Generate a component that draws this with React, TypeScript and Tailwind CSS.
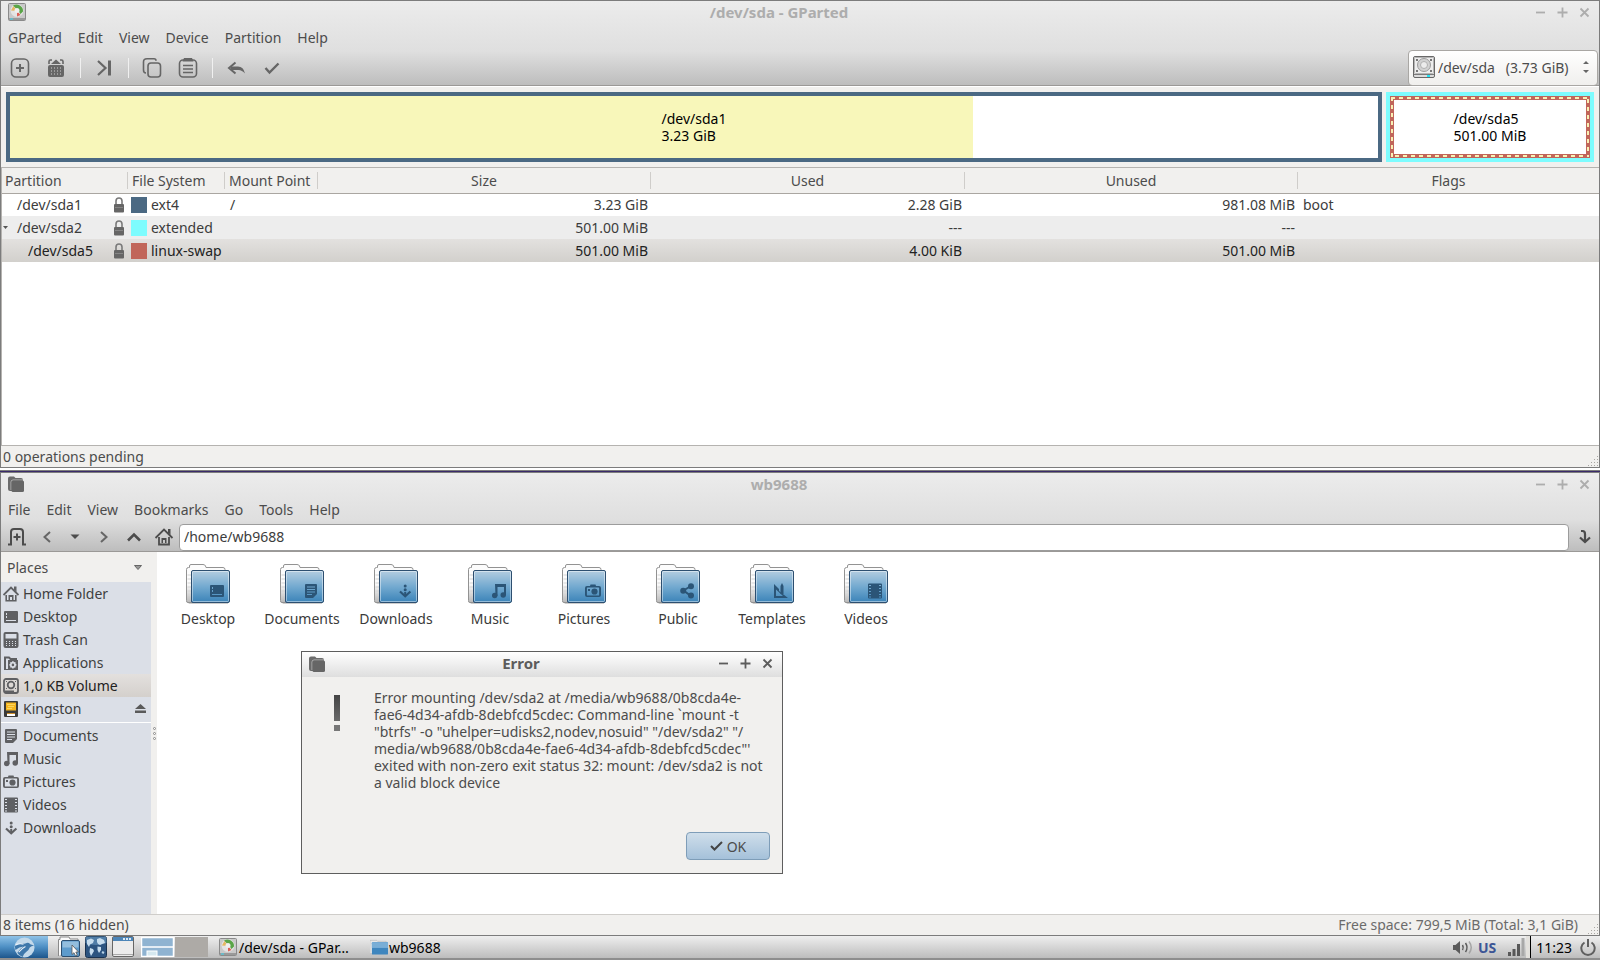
import React from 'react';

type GlyphName =
  | 'home'
  | 'desktop'
  | 'trash'
  | 'applications'
  | 'volume'
  | 'documents'
  | 'music'
  | 'pictures'
  | 'videos'
  | 'downloads'
  | 'public'
  | 'templates';

// 16x16 symbolic glyphs, shared by the side pane and the folder emblems
const glyphs: Record<GlyphName, React.ReactNode> = {
  home: (
    <>
      <path d="M0.5 9L8 1.500l7.500 7.500" fill="none" stroke="currentColor" strokeWidth="1.800" />
      <path d="M11 0.500h2.500v5.500L11 3.500z" />
      <path d="M3.200 9v5.700h9.600V9" fill="none" stroke="currentColor" strokeWidth="1.600" />
      <path d="M5.500 9h5v5H9v-3H7v3H5.500z" />
    </>
  ),
  desktop: (
    <path
      fillRule="evenodd"
      d="M2 2h12a1 1 0 0 1 1 1v10a1 1 0 0 1-1 1H2a1 1 0 0 1-1-1V3a1 1 0 0 1 1-1zM3 4v2h1V4zM3 7v2h1V7zM3 11v1h10v-1z"
    />
  ),
  trash: (
    <path
      fillRule="evenodd"
      d="M2.500 0h11a2 2 0 0 1 2 2v12a2 2 0 0 1-2 2h-11a2 2 0 0 1-2-2V2a2 2 0 0 1 2-2zM2.500 2v4.500h11V2zM3 9v1h1V9zM6 9v1h1V9zM9 9v1h1V9zM12 9v1h1V9zM3 11v1h1v-1zM6 11v1h1v-1zM9 11v1h1v-1zM12 11v1h1v-1zM3 13v1h1v-1zM6 13v1h1v-1zM9 13v1h1v-1zM12 13v1h1v-1z"
    />
  ),
  applications: (
    <>
      <path d="M2 14V2.500h4L7.500 4H14" fill="none" stroke="currentColor" strokeWidth="2" />
      <path
        fillRule="evenodd"
        d="M5 5h10v10H1v-1h4zM9.200 6.300l-.3 1-1-.4-.9.900.4 1-1 .4v1.300l1 .4-.4 1 .9.900 1-.4.3 1h1.400l.3-1 1 .4.9-.9-.4-1 1-.4V9.200l-1-.4.4-1-.9-.9-1 .4-.3-1z"
      />
      <circle cx="9.900" cy="9.900" r="1.300" />
    </>
  ),
  volume: (
    <>
      <rect x="1" y="1" width="14" height="14" rx="2" fill="none" stroke="currentColor" strokeWidth="1.800" />
      <circle cx="8" cy="7" r="3.300" fill="none" stroke="currentColor" strokeWidth="1.800" />
      <path d="M3 3h1v1H3zM12 3h1v1h-1zM3 10h1v1H3zM12 10h1v1h-1zM2 12.500h9V14H2z" />
    </>
  ),
  documents: (
    <path
      fillRule="evenodd"
      d="M3 1h10a1 1 0 0 1 1 1v9l-4 4H3a1 1 0 0 1-1-1V2a1 1 0 0 1 1-1zM4 3.500v1h8v-1zM4 6v1h8V6zM4 8.500v1h8v-1zM4 11v1h5v-1z"
    />
  ),
  music: (
    <>
      <path d="M4 1h11v11.500h-2V4H6.500v9H4.500z" />
      <circle cx="3.700" cy="12.500" r="2.700" />
      <circle cx="12.200" cy="12" r="2.700" />
    </>
  ),
  pictures: (
    <>
      <path
        fillRule="evenodd"
        d="M5.500 1.500h5l.5 1.500h3a2 2 0 0 1 2 2v7a2 2 0 0 1-2 2H2a2 2 0 0 1-2-2V5a2 2 0 0 1 2-2h3zM2.500 4.500a.6.6 0 0 0-.6.6v6.800c0 .4.300.6.600.6h11a.6.6 0 0 0 .6-.6V5.100a.6.6 0 0 0-.6-.6z"
      />
      <circle cx="9.500" cy="8.500" r="3.100" />
      <path d="M3 6h2v2H3z" />
    </>
  ),
  videos: (
    <path
      fillRule="evenodd"
      d="M2 0.500h12a1 1 0 0 1 1 1v13a1 1 0 0 1-1 1H2a1 1 0 0 1-1-1v-13a1 1 0 0 1 1-1zM2 2v1h2V2zM2 5v1h2V5zM2 8v1h2V8zM2 11v1h2v-1zM2 13.500v1h2v-1zM12 2v1h2V2zM12 5v1h2V5zM12 8v1h2V8zM12 11v1h2v-1zM12 13.500v1h2v-1z"
    />
  ),
  downloads: (
    <>
      <path d="M3 8.500l5.200 4.700 5.200-4.700" fill="none" stroke="currentColor" strokeWidth="2.200" />
      <path d="M7.200 9h2v4h-2z" />
      <circle cx="8.200" cy="3" r="1.500" />
      <circle cx="8.200" cy="6.700" r="1.500" />
    </>
  ),
  public: (
    <>
      <path d="M12 3L4.500 7.500 12 13" fill="none" stroke="currentColor" strokeWidth="2" />
      <circle cx="12" cy="3.200" r="3" />
      <circle cx="4.200" cy="7.700" r="3" />
      <circle cx="12" cy="12.500" r="3" />
    </>
  ),
  templates: (
    <>
      <path fillRule="evenodd" d="M1 1l5 5v2l9 7H1zM3 6.500v6.500h7z" />
      <path d="M7.500 3L9 0l1.500 3v8h-3z" />
    </>
  ),
};

function Glyph({ name }: { name: GlyphName }) {
  return (
    <svg className="h-4 w-4 shrink-0 text-[#5f6063]" viewBox="0 0 16 16" fill="currentColor">
      {glyphs[name]}
    </svg>
  );
}

function FolderIcon({ emblem }: { emblem: GlyphName }) {
  return (
    <svg className="h-[41px] w-11" viewBox="0 0 44 41">
      <defs>
        <linearGradient id="folderFront" x1="0" y1="0" x2="0" y2="1">
          <stop offset="0" stopColor="#b4cde0" />
          <stop offset="0.500" stopColor="#74aad0" />
          <stop offset="1" stopColor="#3a83b8" />
        </linearGradient>
        <linearGradient id="folderBack" x1="0" y1="0" x2="0" y2="1">
          <stop offset="0.500" stopColor="#fcfcfc" />
          <stop offset="1" stopColor="#b9b9b9" />
        </linearGradient>
      </defs>
      <path d="M2 38.500h40V40H3z" fill="#9a9a9a" opacity="0.500" />
      <path
        d="M0.500 36.500V5.500q0-2 2-2h1V2q0-1.500 1.500-1.500h12q2 0 2.500 1.500l.5 1.500h17q2 0 2 2V38.500H2q-1.500 0-1.500-1.500z"
        fill="url(#folderBack)"
        stroke="#929292"
      />
      <path d="M1.500 11h4M1.500 15h4M1.500 19h4M1.500 23h4M1.500 27h4M1.500 31h4" stroke="#d4d4d4" />
      <rect x="5.500" y="6.500" width="38" height="32" rx="1.500" fill="url(#folderFront)" stroke="#2d4f70" />
      <rect x="6.500" y="7.500" width="36" height="30" rx="1" fill="none" stroke="#ffffff" opacity="0.450" />
      <g transform="translate(23 19)" fill="currentColor" className="text-[#2b5577]">
        {glyphs[emblem]}
      </g>
    </svg>
  );
}

function AppFolderIcon() {
  return (
    <svg className="h-4 w-4" viewBox="0 0 16 16">
      <path d="M0 2.500Q0 0.500 2 0.500h4L7.500 2H13q2 0 2 2v9q0 2-2 2H2q-2 0-2-2z" fill="#6b6b6b" />
      <path d="M3 14V6q0-2 2-2h10" fill="none" stroke="#b4b4b4" />
      <rect x="3.500" y="4.500" width="12.500" height="11.500" rx="1.500" fill="#666" />
    </svg>
  );
}

function GPartedIcon() {
  return (
    <svg className="h-[18px] w-[18px]" viewBox="0 0 18 18">
      <rect x="0.500" y="0.500" width="17" height="17" rx="1" fill="#c9c9c9" stroke="#8a8a8a" />
      <circle cx="9" cy="7.500" r="6.500" fill="#e4e4e4" />
      <path d="M5 2.500A6.500 6.500 0 0 1 15 8.500L12.500 11 10.500 8z" fill="#5aa548" />
      <path d="M5.500 3L3 7.500l6 .5z" fill="#e5b660" />
      <path d="M9 8l3.500 4L9 13.500z" fill="#dd5f55" />
      <circle cx="9" cy="7.500" r="2.500" fill="#efefef" />
      <path d="M1 15h16v2H1z" fill="#9a9a9a" />
      <path d="M2 15.500h3v1H2z" fill="#3fd8f5" />
    </svg>
  );
}

function DriveIcon() {
  return (
    <svg className="h-[22px] w-[22px] shrink-0" viewBox="0 0 22 22">
      <rect x="0.500" y="0.500" width="21" height="21" rx="1.500" fill="#dcdcdc" stroke="#686868" />
      <rect x="1.500" y="1.500" width="19" height="16" rx="1" fill="#ededed" stroke="#b5b5b5" />
      <circle cx="11" cy="9" r="6.500" fill="#d2d2d2" stroke="#9c9c9c" />
      <circle cx="11" cy="9" r="3.500" fill="#ececec" stroke="#b0b0b0" />
      <path d="M3 3h2v2H3zM17 3h2v2h-2zM3 14h2v2H3zM17 14h2v2h-2z" fill="#777" />
      <path d="M1 18.500h20" stroke="#7a7a7a" />
      <path d="M14 19h3v2h-3z" fill="#22e4f7" />
    </svg>
  );
}

function LockIcon() {
  return (
    <svg className="h-4 w-[10px] shrink-0" viewBox="0 0 10 16">
      <path d="M2 8V4a3 3 0 0 1 6 0v4" fill="none" stroke="#7a7a7a" strokeWidth="1.600" />
      <rect x="0" y="7" width="10" height="8.500" rx="1" fill="#666" />
      <path d="M1 10.500h8" stroke="#868686" />
    </svg>
  );
}

function Grip() {
  return (
    <svg className="h-[11px] w-[11px]" viewBox="0 0 11 11" fill="#a8a6a2">
      <path d="M9 0h1v1H9zM9 3h1v1H9zM6 3h1v1H6zM9 6h1v1H9zM6 6h1v1H6zM3 6h1v1H3zM9 9h1v1H9zM6 9h1v1H6zM3 9h1v1H3zM0 9h1v1H0z" />
    </svg>
  );
}

interface TitleBarProps {
  title: string;
  icon: React.ReactNode;
  active?: boolean;
}

function TitleBar({ title, icon, active = false }: TitleBarProps) {
  const buttons = [
    { label: 'Minimize', path: 'M1 5.500h9' },
    { label: 'Maximize', path: 'M0.500 5.500h10M5.500 0.500v10' },
    { label: 'Close', path: 'M1.500 1.500l8 8M9.500 1.500l-8 8' },
  ];

  return (
    <div
      className={
        active
          ? 'flex h-[25px] items-center bg-linear-to-b from-white to-[#dedede] pr-1 pb-0.5 text-[#5c5c5c]'
          : 'flex h-[22px] items-center pr-1 text-[#adadad]'
      }
    >
      <div className="flex w-8 shrink-0 pl-[7px]">{icon}</div>
      <h2 className="flex-1 pr-1 text-center text-[15px] font-bold">{title}</h2>
      {buttons.map((b) => (
        <button key={b.label} type="button" aria-label={b.label} className="flex w-[22px] justify-center">
          <svg className="h-[11px] w-[11px]" viewBox="0 0 11 11" fill="none" stroke="currentColor" strokeWidth="1.800">
            <path d={b.path} />
          </svg>
        </button>
      ))}
    </div>
  );
}

function MenuBar({ items }: { items: string[] }) {
  return (
    <nav className="flex h-7 items-center gap-4 px-[7px]">
      {items.map((item) => (
        <button key={item} type="button">
          {item}
        </button>
      ))}
    </nav>
  );
}

interface ToolButtonProps {
  label: string;
  className: string;
  children: React.ReactNode;
}

function ToolButton({ label, className, children }: ToolButtonProps) {
  return (
    <button type="button" aria-label={label} className={`flex shrink-0 items-center justify-center ${className}`}>
      <svg
        className="h-5 w-5"
        viewBox="0 0 20 20"
        fill="none"
        stroke="currentColor"
        strokeWidth="1.600"
      >
        {children}
      </svg>
    </button>
  );
}

function ToolSeparator() {
  return (
    <div className="flex w-3 justify-center">
      <div className="h-5 w-px bg-[#f0f0f0]" />
    </div>
  );
}

const partitions = [
  { name: '/dev/sda1', indent: 'pl-[15px]', color: 'bg-[#4b6983]', fs: 'ext4', mount: '/', size: '3.23 GiB', used: '2.28 GiB', unused: '981.08 MiB', flags: 'boot', row: 'bg-white' },
  { name: '/dev/sda2', indent: 'pl-[15px]', color: 'bg-[#7dfcfe]', fs: 'extended', mount: '', size: '501.00 MiB', used: '---', unused: '---', flags: '', row: 'bg-[#ededed]', open: true },
  { name: '/dev/sda5', indent: 'pl-[26px]', color: 'bg-[#c1665a]', fs: 'linux-swap', mount: '', size: '501.00 MiB', used: '4.00 KiB', unused: '501.00 MiB', flags: '', row: 'bg-linear-to-b from-[#e3e1df] to-[#d2d0cc] text-[#222]' },
];

const columns = [
  { label: 'Partition', cell: 'w-[126px] text-left', inner: 'border-r border-[#cfcdca] pl-[3px]' },
  { label: 'File System', cell: 'w-[97px] text-left', inner: 'border-r border-[#cfcdca] pl-1' },
  { label: 'Mount Point', cell: 'w-[93px] text-left', inner: 'border-r border-[#cfcdca] pl-1' },
  { label: 'Size', cell: 'w-[333px]', inner: 'border-r border-[#cfcdca]' },
  { label: 'Used', cell: 'w-[314px]', inner: 'border-r border-[#cfcdca]' },
  { label: 'Unused', cell: 'w-[333px]', inner: 'border-r border-[#cfcdca]' },
  { label: 'Flags', cell: '', inner: '' },
];

function PartitionGraph() {
  return (
    <div className="flex h-20 gap-1 px-[5px] py-[5px] text-black">
      <div className="relative flex flex-1 items-center justify-center border-4 border-[#4b6983] bg-white">
        <div className="absolute inset-y-0 left-0 w-[70.4%] bg-[#f8f7ba]" />
        <p className="relative leading-[17px]">
          /dev/sda1
          <br />
          3.23 GiB
        </p>
      </div>
      <div className="w-52 border-4 border-[#7dfcfe]">
        <div className="relative flex h-full items-center justify-center border-4 border-[#c1665a] bg-white">
          <svg className="absolute -inset-[3px] h-[calc(100%+6px)] w-[calc(100%+6px)] overflow-hidden">
            <rect width="100%" height="100%" fill="none" stroke="#f9f0b4" strokeWidth="4" strokeDasharray="4 4" />
          </svg>
          <p className="relative leading-[17px]">
            /dev/sda5
            <br />
            501.00 MiB
          </p>
        </div>
      </div>
    </div>
  );
}

function GPartedWindow() {
  return (
    <section className="flex min-h-0 flex-1 flex-col border border-[#7c7c7c] bg-[#f1f0ee]">
      <header className="border-b border-[#9b9997] bg-linear-to-b from-[#ececec] via-[#dfdfdf] via-60% to-[#bdbdbd]">
        <TitleBar title="/dev/sda - GParted" icon={<GPartedIcon />} />
        <MenuBar items={['GParted', 'Edit', 'View', 'Device', 'Partition', 'Help']} />
        <div className="flex h-[34px] items-center pl-px text-[#666]">
          <ToolButton label="New" className="w-9">
            <rect x="1.500" y="1" width="17" height="18" rx="4.500" />
            <path d="M10 6v8M6 10h8" strokeWidth="2" />
          </ToolButton>
          <ToolButton label="Delete" className="w-9">
            <path d="M3 6V3.500Q3 2 4.500 2H6M17 6V3.500Q17 2 15.500 2H14" />
            <path d="M5 6l5-4.500L15 6z" fill="currentColor" stroke="none" />
            <rect x="2" y="7" width="16" height="12" rx="2" fill="currentColor" stroke="none" />
            <path d="M5 10h10M5 13h10M5 16h10" stroke="#cfcfcf" strokeWidth="1" strokeDasharray="1 2" />
          </ToolButton>
          <ToolSeparator />
          <ToolButton label="Resize/Move" className="w-9">
            <path d="M4 3l7.500 7L4 17" strokeWidth="2.200" />
            <path d="M15.500 2.500v15" strokeWidth="3" />
          </ToolButton>
          <ToolSeparator />
          <ToolButton label="Copy" className="w-9">
            <path d="M4 15Q1.500 15 1.500 12V4Q1.500 0.800 5 0.800h7q2 0 2 2" />
            <rect x="6" y="5" width="12.500" height="14" rx="3" />
          </ToolButton>
          <ToolButton label="Paste" className="w-9">
            <rect x="1.500" y="2" width="17" height="17" rx="3.500" />
            <path d="M6 0h8l1.500 3.500h-11z" fill="currentColor" stroke="none" />
            <path d="M5 7.500h10M5 11h10M5 14.500h10" strokeWidth="1.400" />
          </ToolButton>
          <ToolSeparator />
          <ToolButton label="Undo" className="w-9">
            <path d="M9.500 4.500L3 10l6.500 5.500" strokeWidth="2" />
            <path d="M5 8.500h7q5.500 0 7 7-3-3.500-6.500-3.500H5z" fill="currentColor" stroke="none" />
          </ToolButton>
          <ToolButton label="Apply" className="w-9">
            <path d="M3.500 10l4 4.500 9-9" strokeWidth="2.400" />
          </ToolButton>
          <div className="relative -my-px ml-auto mr-px flex h-9 w-[190px] items-center rounded border border-[#a9a7a4] bg-linear-to-b from-white to-[#f0efed] pl-1 pb-0.5 text-[#4c4c4c]">
            <DriveIcon />
            <select aria-label="Device" className="h-full flex-1 appearance-none bg-transparent pl-[3px] outline-none">
              <option>{'/dev/sda\u00a0\u00a0\u00a0(3.73 GiB)'}</option>
            </select>
            <svg className="pointer-events-none absolute right-2 h-3 w-[6px]" viewBox="0 0 6 12" fill="#666">
              <path d="M0 3l3-3 3 3zM0 9h6l-3 3z" />
            </svg>
          </div>
        </div>
      </header>
      <div className="border-t border-white">
        <PartitionGraph />
      </div>
      <div className="min-h-0 flex-1 border border-r-0 border-[#b5b3b0] bg-white">
        <table className="w-full table-fixed border-collapse">
          <thead>
            <tr className="h-[25px] border-b border-[#aaa6a1] bg-[#f1f0ee]">
              {columns.map((c) => (
                <th key={c.label} className={`p-0 font-normal ${c.cell}`}>
                  <div className={`h-[17px] leading-[17px] ${c.inner}`}>{c.label}</div>
                </th>
              ))}
            </tr>
          </thead>
          <tbody className="text-[#3c3c3c]">
            {partitions.map((p) => (
              <tr key={p.name} className={`h-[23px] ${p.row}`}>
                <td className="p-0">
                  <div className={`relative flex items-center justify-between pr-1 ${p.indent}`}>
                    {p.open && (
                      <svg className="absolute left-px h-[3px] w-[5px]" viewBox="0 0 5 3" fill="#555">
                        <path d="M0 0h5L2.500 3z" />
                      </svg>
                    )}
                    {p.name}
                    <LockIcon />
                  </div>
                </td>
                <td className="p-0">
                  <div className="flex items-center gap-1 pl-[3px]">
                    <span className={`h-4 w-4 shrink-0 ${p.color}`} />
                    {p.fs}
                  </div>
                </td>
                <td className="p-0 pl-[5px]">{p.mount}</td>
                <td className="p-0 pr-[3px] text-right">{p.size}</td>
                <td className="p-0 pr-[3px] text-right">{p.used}</td>
                <td className="p-0 pr-[3px] text-right">{p.unused}</td>
                <td className="p-0 pl-[5px]">{p.flags}</td>
              </tr>
            ))}
          </tbody>
        </table>
      </div>
      <footer className="flex h-[21px] items-center justify-between pl-[2px]">
        <span>0 operations pending</span>
        <span className="self-end">
          <Grip />
        </span>
      </footer>
    </section>
  );
}

const places: { label: string; icon: GlyphName | 'usb' }[] = [
  { label: 'Home Folder', icon: 'home' },
  { label: 'Desktop', icon: 'desktop' },
  { label: 'Trash Can', icon: 'trash' },
  { label: 'Applications', icon: 'applications' },
  { label: '1,0 KB Volume', icon: 'volume' },
  { label: 'Kingston', icon: 'usb' },
];

const bookmarks: { label: string; icon: GlyphName }[] = [
  { label: 'Documents', icon: 'documents' },
  { label: 'Music', icon: 'music' },
  { label: 'Pictures', icon: 'pictures' },
  { label: 'Videos', icon: 'videos' },
  { label: 'Downloads', icon: 'downloads' },
];

const folders: { label: string; icon: GlyphName }[] = [
  { label: 'Desktop', icon: 'desktop' },
  { label: 'Documents', icon: 'documents' },
  { label: 'Downloads', icon: 'downloads' },
  { label: 'Music', icon: 'music' },
  { label: 'Pictures', icon: 'pictures' },
  { label: 'Public', icon: 'public' },
  { label: 'Templates', icon: 'templates' },
  { label: 'Videos', icon: 'videos' },
];

function UsbIcon() {
  return (
    <svg className="h-4 w-4 shrink-0" viewBox="0 0 16 16">
      <rect x="1" y="0" width="14" height="16" rx="1" fill="#3a3a3a" />
      <rect x="3" y="1.500" width="10" height="8" fill="#f5b51e" />
      <path d="M4 3.500h8M5 5.500h6M4 7.500h5" stroke="#fad45c" />
      <rect x="4" y="12" width="8" height="3" fill="#fff" />
      <path d="M4 12.500h8" stroke="#c98b2a" />
    </svg>
  );
}

function Sidebar() {
  return (
    <aside className="flex w-[150px] shrink-0 flex-col">
      <div className="flex h-[30px] items-center justify-between pl-[6px] pr-[9px]">
        <span>Places</span>
        <svg className="h-[5px] w-2" viewBox="0 0 8 5">
          <path d="M0.500 0.500h7L4 4.500z" fill="#999" stroke="#666" />
        </svg>
      </div>
      <div className="flex-1 bg-[#dbdfe7] text-[#3f3f3f]">
        {places.map((p) => (
          <button
            key={p.label}
            type="button"
            className={
              p.icon === 'volume'
                ? 'flex h-[23px] w-full items-center gap-1 bg-linear-to-b from-[#e3e0de] to-[#d4d0cc] pl-[2px] text-[#222]'
                : 'flex h-[23px] w-full items-center gap-1 pl-[2px]'
            }
          >
            {p.icon === 'usb' ? <UsbIcon /> : <Glyph name={p.icon} />}
            {p.label}
            {p.icon === 'usb' && (
              <svg className="mr-[5px] ml-auto h-[9px] w-[11px]" viewBox="0 0 11 9" fill="#5a5a5a">
                <path d="M0 5l5.500-5L11 5zM0 6.500h11V9H0z" />
              </svg>
            )}
          </button>
        ))}
        <div className="flex h-1 flex-col justify-center">
          <div className="h-px bg-white" />
        </div>
        {bookmarks.map((p) => (
          <button key={p.label} type="button" className="flex h-[23px] w-full items-center gap-1 pl-[2px]">
            <Glyph name={p.icon} />
            {p.label}
          </button>
        ))}
      </div>
    </aside>
  );
}

function FileManagerWindow() {
  return (
    <section className="flex min-h-0 flex-1 flex-col border border-[#7c7c7c] bg-[#f1f0ee]">
      <header className="border-b border-[#9b9997] bg-linear-to-b from-[#ececec] via-[#dfdfdf] via-60% to-[#bdbdbd]">
        <TitleBar title="wb9688" icon={<AppFolderIcon />} />
        <MenuBar items={['File', 'Edit', 'View', 'Bookmarks', 'Go', 'Tools', 'Help']} />
        <div className="flex h-7 items-center">
          <ToolButton label="New tab" className="w-8">
            <path d="M1 17.500h3V5Q4 2 7 2h6q3 0 3 3v12.500h3" strokeWidth="2" />
            <path d="M10 6.500v7M6.500 10h7" strokeWidth="2" />
          </ToolButton>
          <ToolButton label="Back" className="w-7">
            <path d="M13 5l-5.500 5 5.500 5" strokeWidth="2" stroke="#666" />
          </ToolButton>
          <ToolButton label="History" className="w-7">
            <path d="M5.500 7.500h9L10 12z" fill="currentColor" stroke="none" />
          </ToolButton>
          <ToolButton label="Forward" className="w-[30px]">
            <path d="M7 5l5.500 5L7 15" strokeWidth="2" stroke="#666" />
          </ToolButton>
          <ToolButton label="Up" className="w-[30px]">
            <path d="M4 13.500L10 7.500l6 6" strokeWidth="2.600" />
          </ToolButton>
          <ToolButton label="Home" className="w-[30px]">
            <path d="M1.500 11L10 2.500l8.500 8.500" strokeWidth="1.800" />
            <path d="M14 2h2.500v6L14 5.500z" fill="currentColor" stroke="none" />
            <path d="M5 10v7.500h10V10" strokeWidth="1.800" />
            <path d="M7.500 11h5v5H11v-3H9v3H7.500z" fill="currentColor" stroke="none" />
          </ToolButton>
          <input
            aria-label="Location"
            defaultValue="/home/wb9688"
            className="h-[27px] min-w-0 flex-1 rounded-sm border border-[#9c9c9c] bg-white px-1 pb-0.5 text-[#3c3c3c] outline-none"
          />
          <ToolButton label="Go" className="w-[30px]">
            <path d="M7 4h1.500q2.500 0 2.500 3v7" strokeWidth="2.200" />
            <path d="M6 10.500l5 4.500 5-4.500" strokeWidth="2.200" />
          </ToolButton>
        </div>
      </header>
      <div className="flex min-h-0 flex-1">
        <Sidebar />
        <div className="flex w-[6px] shrink-0 flex-col items-center justify-center">
          <svg className="h-[13px] w-[3px]" viewBox="0 0 3 13" fill="#fff" stroke="#888">
            <circle cx="1.500" cy="1.500" r="1" />
            <circle cx="1.500" cy="6.500" r="1" />
            <circle cx="1.500" cy="11.500" r="1" />
          </svg>
        </div>
        <div className="flex-1 bg-white">
          <ul className="flex flex-wrap pl-1 pt-3 text-[#3a3a3a]">
            {folders.map((f) => (
              <li key={f.label} className="flex w-[94px] flex-col items-center gap-1">
                <FolderIcon emblem={f.icon} />
                <span>{f.label}</span>
              </li>
            ))}
          </ul>
        </div>
      </div>
      <footer className="flex h-[21px] items-center border-t border-[#cfcdca] pl-[2px]">
        <span className="pb-0.5">8 items (16 hidden)</span>
        <span className="ml-auto pr-[10px] pb-0.5 text-[#6b6b6b]">Free space: 799,5 MiB (Total: 3,1 GiB)</span>
        <span className="self-end">
          <Grip />
        </span>
      </footer>
    </section>
  );
}

function ErrorDialog() {
  return (
    <div
      role="alertdialog"
      aria-label="Error"
      className="absolute left-[301px] top-[651px] flex h-[223px] w-[482px] flex-col border border-[#5e5e5e] bg-[#f1f0ee]"
    >
      <TitleBar title="Error" icon={<AppFolderIcon />} active />
      <div className="flex flex-1 pl-8 pt-3">
        <svg className="mt-[6px] h-9 w-[6px] shrink-0" viewBox="0 0 6 36">
          <defs>
            <linearGradient id="bang" x1="0" y1="0" x2="0" y2="1">
              <stop offset="0" stopColor="#444" />
              <stop offset="1" stopColor="#6a6a6a" />
            </linearGradient>
          </defs>
          <rect width="6" height="26" fill="url(#bang)" />
          <rect y="30" width="6" height="6" fill="#777" />
        </svg>
        <p className="ml-[34px] whitespace-nowrap leading-[17px]">
          Error mounting /dev/sda2 at /media/wb9688/0b8cda4e-
          <br />
          fae6-4d34-afdb-8debfcd5cdec: Command-line `mount -t
          <br />
          "btrfs" -o "uhelper=udisks2,nodev,nosuid" "/dev/sda2" "/
          <br />
          media/wb9688/0b8cda4e-fae6-4d34-afdb-8debfcd5cdec"'
          <br />
          exited with non-zero exit status 32: mount: /dev/sda2 is not
          <br />
          a valid block device
        </p>
      </div>
      <div className="flex justify-end pb-[13px] pr-3">
        <button
          type="button"
          className="flex h-7 w-[84px] items-center justify-center gap-1 rounded border border-[#7e9db8] bg-linear-to-b from-[#cfdeea] to-[#a5c1da]"
        >
          <svg className="h-3 w-[13px]" viewBox="0 0 13 12" fill="none" stroke="#444" strokeWidth="2">
            <path d="M1 6l3.500 3.500L12 2" />
          </svg>
          OK
        </button>
      </div>
    </div>
  );
}

function Taskbar() {
  return (
    <footer className="flex h-6 shrink-0 items-center border-b-2 border-[#8e8e8e] bg-linear-to-b from-[#efefef] to-[#bdbdbd] text-black">
      <button type="button" aria-label="Start menu" className="flex h-full w-12 items-center justify-center bg-linear-to-b from-[#8fc3e8] via-[#4d8fc4] to-[#1d568c]">
        <svg className="h-[21px] w-[21px]" viewBox="0 0 22 22">
          <circle cx="11" cy="11" r="10.500" fill="#c3d9ea" />
          <path d="M1 9.500q5-3 10-2.500l3-1q2 0 3 1.500l4 1.500q-3 .5-4.500 2-1 3-3.500 4.500-3 2-4 5.500-4-1.500-5.500-4.500 3-4.500 6.500-6.500-4.500.5-8.500 3.500-.5-2-.5-4z" fill="#3f78ab" />
          <path d="M2 8q4-1.500 8-.5M5 16q3-4 7-6" fill="none" stroke="#e9f1f8" strokeWidth="1.200" />
        </svg>
      </button>
      <div className="ml-[10px] flex gap-[5px]">
        <button type="button" aria-label="File manager">
          <svg className="h-[22px] w-[22px]" viewBox="0 0 22 22">
            <path d="M0.500 20V3.500h1.500V1h9l1 2h8v5" fill="#fafafa" stroke="#8a8a8a" />
            <rect x="3.500" y="4.500" width="18" height="16" rx="1.500" fill="#5d9bcc" stroke="#2d4f70" />
            <rect x="4.500" y="5.500" width="16" height="6" fill="#94bedd" />
            <path d="M14 9v9.500l2-1.800 1.500 3.200 1.800-.8-1.500-3.100h2.700z" fill="#fff" stroke="#555" strokeWidth="0.800" />
          </svg>
        </button>
        <button type="button" aria-label="Web browser">
          <svg className="h-[22px] w-[22px]" viewBox="0 0 22 22">
            <rect x="0.500" y="0.500" width="21" height="21" rx="2" fill="#2c5480" stroke="#1b3350" />
            <path d="M0.500 2.500q0-2 2-2h17q2 0 2 2V7Q11 11 .5 7z" fill="#5f8fb8" opacity="0.700" />
            <path d="M2 4l4-1.500L9 4l-1 3-3 1.500L4 11 2 8zM12 3l3-1 4 2 1 3-3 1-2 1-2-1-1-2zM5 12l3 1 1 2-3 5-1.500-4zM12.500 10.500L16 11v3l-2 3-1.500-3z" fill="#c6dced" />
            <path d="M17.500 15l2 1-1 2-2-1z" fill="#b7d2e7" />
          </svg>
        </button>
        <button type="button" aria-label="Show desktop">
          <svg className="h-[22px] w-[22px]" viewBox="0 0 22 22">
            <rect x="0.500" y="0.500" width="21" height="20" rx="1.500" fill="#ececec" stroke="#666" />
            <path d="M1 1h20v4H1z" fill="#4c85b8" />
            <path d="M11 2h2v2h-2zM14 2h2v2h-2zM17 2h2v2h-2z" fill="#dbe9f4" />
            <path d="M1 18.500h20" stroke="#aaa" />
          </svg>
        </button>
      </div>
      <svg className="ml-[7px] h-5 w-[67px] shrink-0" viewBox="0 0 67 20">
        <rect width="33" height="20" fill="#8fb3d1" />
        <path d="M0.500 0.500h32v19H.5zM0 10h33" fill="none" stroke="#fff" strokeWidth="1.500" />
        <rect x="6" y="14" width="10" height="5" fill="#d5e8ef" stroke="#fff" />
        <rect x="34" width="33" height="20" fill="#adaaa6" />
      </svg>
      <button type="button" className="ml-[11px] flex w-[151px] items-center gap-[2px]">
        <GPartedIcon />
        /dev/sda - GPar…
      </button>
      <button type="button" className="flex items-center gap-px">
        <svg className="h-4 w-[18px]" viewBox="0 0 19 16">
          <path d="M0 15V1h7l1 1h9v13z" fill="#e8e8e8" stroke="#aaa" strokeWidth="0.500" />
          <rect x="2" y="3" width="17" height="13" rx="1" fill="#3f86be" />
          <path d="M2 3h17v6H2z" fill="#79aed6" />
        </svg>
        wb9688
      </button>
      <div className="ml-auto flex h-full items-center">
        <svg className="h-[15px] w-5" viewBox="0 0 20 15" fill="none" stroke="#5a5a5a" strokeWidth="1.500">
          <path d="M0 5h2.500L7 1v13l-4.500-4H0z" fill="#5a5a5a" stroke="none" />
          <path d="M9.500 5q1.500 2.500 0 5M12.500 3q3 4.500 0 9" />
          <path d="M16 1.500q4.500 6 0 12" stroke="#a5a5a5" />
        </svg>
        <span className="ml-[5px] font-bold text-[#3b5595]">US</span>
        <svg className="ml-3 h-[18px] w-[17px]" viewBox="0 0 17 18" fill="#585858">
          <path d="M0 14h3v4H0zM4.500 11h3v7h-3zM9 6h3v12H9z" />
          <path d="M13.500 0h3v18h-3z" fill="#a8a8a8" />
        </svg>
        <div className="ml-px h-full w-[5px] border-r border-black bg-[#e3e1dd]" />
        <span className="ml-[5px] mr-2">11:23</span>
        <button type="button" aria-label="Shut down" className="mr-1">
          <svg className="h-[17px] w-4" viewBox="0 0 16 17" fill="none" stroke="#5f5f5f" strokeWidth="2">
            <path d="M4.500 3.500a6.700 6.700 0 1 0 7 0M8 0v8" />
          </svg>
        </button>
      </div>
    </footer>
  );
}

export default function App() {
  return (
    <div className="relative flex h-screen flex-col overflow-hidden bg-[#f1f0ee] font-['Noto_Sans',sans-serif] text-[14px] leading-[19px] text-[#4c4c4c]">
      <div className="flex min-h-0 flex-1 basis-0 flex-col">
        <GPartedWindow />
      </div>
      <div className="flex min-h-0 flex-1 basis-0 flex-col">
        {/* strip of desktop left between the two windows */}
        <div className="h-1 border-b border-[#3a2a6a] bg-linear-to-b from-white from-50% to-[#7c7c7c] to-50%" />
        <FileManagerWindow />
      </div>
      <Taskbar />
      <ErrorDialog />
    </div>
  );
}
